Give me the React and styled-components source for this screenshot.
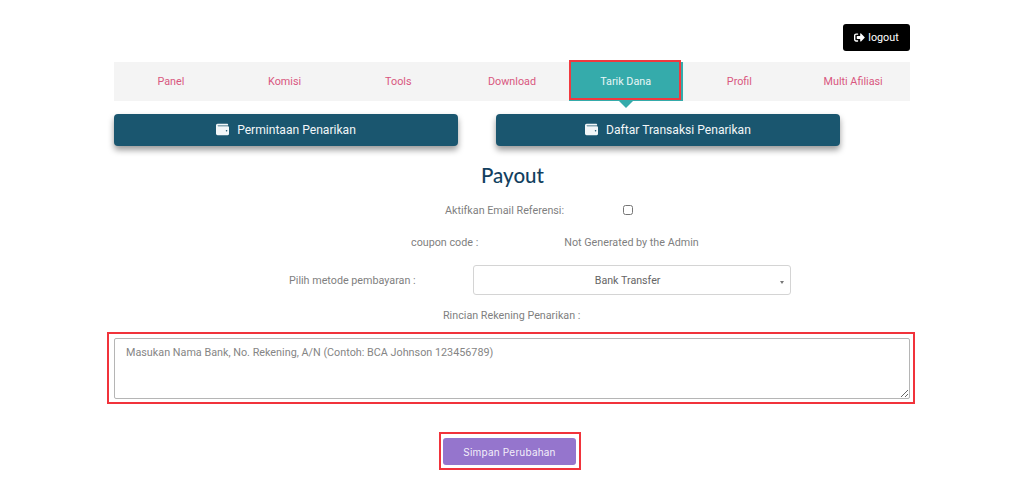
import React from "react";
import styled, { createGlobalStyle } from "styled-components";
import { FaWallet, FaSignOutAlt } from "react-icons/fa";

const Global = createGlobalStyle`
  html, body { margin: 0; padding: 0; background: #fff; }
  body { font-family: Roboto, "Liberation Sans", sans-serif; font-size: 10.75px; color: #7f7f7f; }
`;

const Page = styled.div`
  width: 796px;
  margin: 0 0 0 114px;
  padding-top: 24px;
  display: flex;
  flex-direction: column;
`;
const TopBar = styled.div`
  display: flex;
  justify-content: flex-end;
  height: 27px;
  margin-bottom: 11px;
`;
const LogoutButton = styled.button`
  width: 67px;
  height: 27px;
  border: 0;
  border-radius: 3px;
  background: #000;
  color: #fff;
  font: 400 10.8px Roboto, sans-serif;
  display: flex;
  align-items: center;
  justify-content: center;
  gap: 3px;
  padding: 0;
`;
const Nav = styled.nav`
  display: grid;
  grid-template-columns: repeat(7, 1fr);
  height: 39px;
  background: #f4f4f4;
`;
const Tab = styled.a`
  position: relative;
  display: flex;
  align-items: center;
  justify-content: center;
  padding-bottom: 1px;
  font-size: 10.8px;
  color: ${p => (p.$active ? "#e8f6f6" : "#d9577f")};
  background: ${p => (p.$active ? "#35abab" : "transparent")};
  ${p => p.$active && `
    &::before {
      content: "";
      position: absolute;
      left: 0;
      right: 2px;
      top: -2px;
      bottom: 1px;
      border: 2px solid #f13a3f;
    }
    &::after {
      content: "";
      position: absolute;
      left: 50%;
      top: 100%;
      margin-left: -7px;
      border: 7px solid transparent;
      border-top: 7px solid #35abab;
      border-bottom: 0;
    }
  `}
`;
const ActionRow = styled.div`
  display: flex;
  gap: 38px;
  margin-top: 13px;
`;
const ActionButton = styled.button`
  width: 344px;
  height: 32px;
  border: 0;
  border-radius: 4px;
  background: #1a566f;
  color: #f2f6f8;
  font: 400 12.1px Roboto, sans-serif;
  display: flex;
  align-items: center;
  justify-content: center;
  gap: 8px;
  padding: 0 0 1px;
  box-shadow: 0 4px 6px rgba(0, 0, 0, 0.4);
`;
const Title = styled.h2`
  margin: 14px 0 0;
  padding-left: 367px;
  height: 30px;
  font: 500 20.5px/30px Lato, sans-serif;
  color: #123f5f;
`;
const Row = styled.div`
  display: flex;
  align-items: center;
  padding-left: ${p => p.$indent}px;
  gap: ${p => p.$gap}px;
  height: ${p => p.$height}px;
  margin-top: ${p => p.$top}px;
`;
const Check = styled.input`
  width: 10px;
  height: 10px;
  margin: 0;
`;
const SelectBox = styled.div`
  position: relative;
  width: 318px;
  height: 30px;
`;
const Select = styled.select`
  appearance: none;
  width: 100%;
  height: 100%;
  border: 1px solid #d4d4d4;
  border-radius: 3px;
  background: #fff;
  color: #666;
  font: 400 10.7px Roboto, sans-serif;
  text-align: center;
  padding: 0 8px 0 0;
`;
const Caret = styled.span`
  position: absolute;
  right: 7px;
  top: 16px;
  border: 2.5px solid transparent;
  border-top: 3px solid #777;
  border-bottom: 0;
`;
const Highlight = styled.div`
  border: 2px solid #f1333b;
  padding: ${p => p.$pad};
  margin: ${p => p.$margin};
  align-self: ${p => p.$align || "stretch"};
  display: flex;
`;
const Area = styled.textarea`
  width: 100%;
  height: 61px;
  box-sizing: border-box;
  border: 1px solid #b5b5b5;
  border-radius: 2px;
  padding: 7px 11px;
  font: 400 10.8px Roboto, sans-serif;
  color: #777;
  &::placeholder { color: #858585; opacity: 1; }
`;
const SaveButton = styled.button`
  width: 133px;
  height: 27px;
  border: 0;
  border-radius: 3px;
  background: #9575cd;
  color: #f3effa;
  font: 400 10px Inter, sans-serif;
  letter-spacing: 0.2px;
  padding: 0;
`;

const tabs = ["Panel", "Komisi", "Tools", "Download", "Tarik Dana", "Profil", "Multi Afiliasi"];

export default function App() {
  return (
    <Page>
      <Global />
      <TopBar>
        <LogoutButton><FaSignOutAlt size={11} /> logout</LogoutButton>
      </TopBar>
      <Nav>
        {tabs.map(t => <Tab key={t} $active={t === "Tarik Dana"}>{t}</Tab>)}
      </Nav>
      <ActionRow>
        <ActionButton><FaWallet size={13} /> Permintaan Penarikan</ActionButton>
        <ActionButton><FaWallet size={13} /> Daftar Transaksi Penarikan</ActionButton>
      </ActionRow>
      <Title>Payout</Title>
      <Row $indent={331} $gap={59} $height={20} $top={10}>
        <span>Aktifkan Email Referensi:</span>
        <Check type="checkbox" />
      </Row>
      <Row $indent={297} $gap={86} $height={20} $top={12}>
        <span>coupon code :</span>
        <span>Not Generated by the Admin</span>
      </Row>
      <Row $indent={175} $gap={57} $height={30} $top={13}>
        <span>Pilih metode pembayaran :</span>
        <SelectBox>
          <Select defaultValue="bank"><option value="bank">Bank Transfer</option></Select>
          <Caret />
        </SelectBox>
      </Row>
      <Row $indent={329} $gap={0} $height={20} $top={10}>
        <span>Rincian Rekening Penarikan :</span>
      </Row>
      <Highlight $pad="4px 3px 3px 5px" $margin="7px -5px 0 -7px">
        <Area placeholder="Masukan Nama Bank, No. Rekening, A/N (Contoh: BCA Johnson 123456789)" />
      </Highlight>
      <Highlight $pad="4px 3px 3px 2px" $margin="28px 0 0 325px" $align="flex-start">
        <SaveButton>Simpan Perubahan</SaveButton>
      </Highlight>
    </Page>
  );
}
